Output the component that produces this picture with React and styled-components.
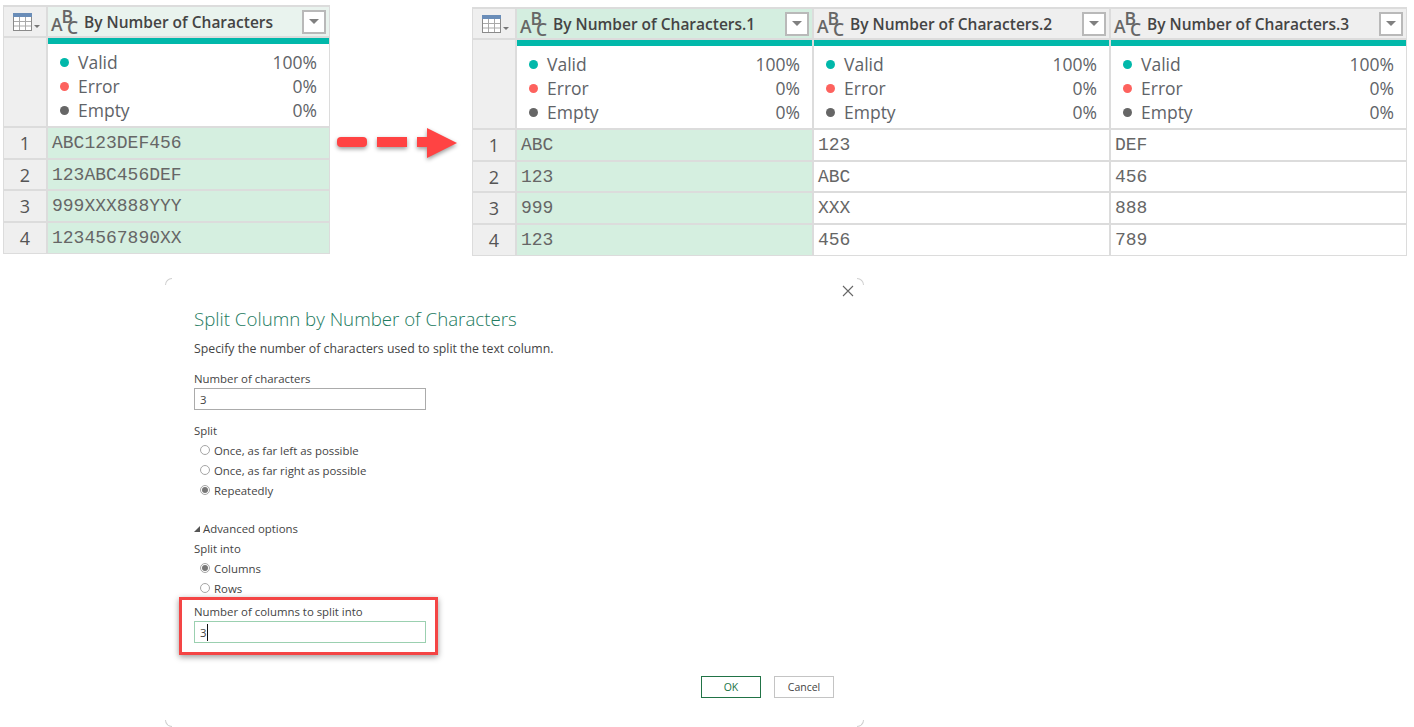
import React from 'react';
import styled, { createGlobalStyle } from 'styled-components';

const UI_FONT = '"Open Sans", "Noto Sans", sans-serif';

const GlobalStyle = createGlobalStyle`
  html, body {
    margin: 0;
    padding: 0;
    background: #fff;
  }
  * {
    box-sizing: border-box;
  }
`;

const Page = styled.div`
  width: 1414px;
  height: 727px;
  overflow: hidden;
  padding: 5px 0 0 3px;
  font-family: ${UI_FONT};
  color: #555;
`;

const TopRow = styled.div`
  display: flex;
  align-items: flex-start;
  height: 251px;
`;

const Table = styled.div`
  display: grid;
  grid-template-columns: ${p => p.$indexWidth}px repeat(${p => p.$cols}, ${p => p.$colWidth}px);
  grid-template-rows: 29px 88px ${p => p.$rowHeights};
  gap: 2px;
  padding: 2px 1px 1px;
  margin-top: ${p => p.$offset || 0}px;
  background: #dcdcdc;
  width: fit-content;
`;

const IndexHead = styled.div`
  background: #efefef;
  display: flex;
  align-items: center;
  padding-left: 9px;
`;

const IndexCell = styled.div`
  background: #efefef;
  display: flex;
  align-items: center;
  justify-content: center;
  font-size: 18px;
  color: #555;
`;

const ColHead = styled.div`
  background: ${p => (p.$tint === 'strong' ? '#d4eee0' : p.$tint === 'soft' ? '#e9f3ee' : '#efefef')};
  display: flex;
  align-items: center;
  padding: 0 3px;
`;

const ColName = styled.span`
  flex: 1;
  margin-left: 7px;
  font-size: 15.5px;
  font-weight: 600;
  color: #444;
  white-space: nowrap;
`;

const FilterButton = styled.div`
  width: 24px;
  height: 24px;
  background: #fff;
  border: 2px solid #b9b9b9;
  display: flex;
  align-items: center;
  justify-content: center;
  &::after {
    content: '';
    border-left: 5px solid transparent;
    border-right: 5px solid transparent;
    border-top: 5px solid #808080;
  }
`;

const StatsCell = styled.div`
  background: #fff;
  border-top: 6px solid #01b8aa;
  padding: 6px 12px 0;
`;

const StatRow = styled.div`
  display: flex;
  align-items: center;
  height: 24px;
  font-size: 17.5px;
  color: #5f6368;
`;

const Dot = styled.span`
  width: 9px;
  height: 9px;
  border-radius: 50%;
  margin-right: 9px;
  background: ${p => p.$color};
`;

const StatValue = styled.span`
  margin-left: auto;
`;

const DataCell = styled.div`
  background: ${p => (p.$selected ? '#d5efe0' : '#fff')};
  display: flex;
  align-items: center;
  padding-left: 4px;
  font-family: "Liberation Mono", monospace;
  font-size: 18px;
  color: #666;
  white-space: pre;
`;

const ArrowSlot = styled.div`
  width: 142px;
  height: 251px;
  padding: 123px 0 0 7px;
`;

const Dialog = styled.div`
  position: relative;
  width: 699px;
  height: 449px;
  margin: 22px 0 0 162px;
  padding: 27px 30px 0 29px;
  font-size: 11.4px;
  color: #444;
`;

const Corner = styled.span`
  position: absolute;
  width: 7px;
  height: 7px;
  border: 0 solid #cfcfcf;
  ${p => (p.$v === 'top' ? 'top: 0; border-top-width: 1px;' : 'bottom: 0; border-bottom-width: 1px;')}
  ${p => (p.$h === 'left' ? 'left: 0; border-left-width: 1px;' : 'right: 0; border-right-width: 1px;')}
  border-${p => p.$v}-${p => p.$h}-radius: 7px;
`;

const CloseIcon = styled.svg`
  position: absolute;
  top: 7px;
  right: 10px;
`;

const Title = styled.div`
  font-size: 18.7px;
  font-weight: 300;
  line-height: 28px;
  color: #217a5e;
  white-space: nowrap;
`;

const Description = styled.div`
  font-size: 12.3px;
  height: 20px;
  line-height: 22px;
  margin-top: 5px;
`;

const Label = styled.div`
  height: 20px;
  line-height: 22px;
  margin-top: ${p => p.$top || 0}px;
`;

const TextInput = styled.div`
  width: 232px;
  height: 22px;
  border: 1px solid ${p => (p.$focused ? '#9bd0b0' : '#ababab')};
  display: flex;
  align-items: center;
  padding-left: 5px;
`;

const Caret = styled.span`
  width: 1px;
  height: 17px;
  background: #111;
`;

const RadioRow = styled.div`
  display: flex;
  align-items: center;
  height: 20px;
  padding-left: 6px;
`;

const Radio = styled.span`
  width: 10px;
  height: 10px;
  border-radius: 50%;
  border: 1px solid #a6a6a6;
  margin-right: 4px;
  display: flex;
  align-items: center;
  justify-content: center;
  &::after {
    content: '';
    display: ${p => (p.$checked ? 'block' : 'none')};
    width: 6px;
    height: 6px;
    border-radius: 50%;
    background: #777;
  }
`;

const Advanced = styled.div`
  display: flex;
  align-items: center;
  height: 20px;
  padding-top: 2px;
  line-height: 22px;
  margin-top: 18px;
  &::before {
    content: '';
    width: 0;
    height: 0;
    margin-right: 3px;
    border-left: 6px solid transparent;
    border-bottom: 6px solid #555;
  }
`;

const Highlight = styled.div`
  width: 259px;
  height: 58px;
  margin: -1px 0 0 -15px;
  padding: 1px 0 0 12px;
  border: 3px solid #f44545;
  box-shadow: 0 2px 6px rgba(0, 0, 0, 0.4);
`;

const ButtonRow = styled.div`
  display: flex;
  justify-content: flex-end;
  gap: 13px;
  margin-top: 21px;
`;

const Button = styled.div`
  width: 60px;
  height: 22px;
  display: flex;
  align-items: center;
  justify-content: center;
  font-size: 10.5px;
  border: 1px solid ${p => (p.$primary ? '#217346' : '#c4c4c4')};
  color: ${p => (p.$primary ? '#217346' : '#444')};
`;

const TableIcon = () => (
  <svg width="28" height="18" viewBox="0 0 28 18">
    <rect x="0.5" y="0.5" width="18" height="17" fill="#fff" stroke="#8a8a8a" />
    <rect x="0" y="0" width="19" height="4" fill="#6a8db8" />
    <path d="M6.5 4v13M12.5 4v13M1 8.5h17M1 13h17" stroke="#a9a9a9" />
    <path d="M21 12h6l-3 3z" fill="#777" />
  </svg>
);

const AbcIcon = () => (
  <svg
    width="26"
    height="27"
    viewBox="0 0 26 27"
    overflow="visible"
    fontFamily={UI_FONT}
    fontSize="17.5"
    fontWeight="600"
    fill="#666"
  >
    <text x="0" y="23">A</text>
    <text x="10.5" y="15">B</text>
    <text x="16" y="26">C</text>
  </svg>
);

const ArrowIcon = () => (
  <svg width="130" height="40" viewBox="0 0 130 40" style={{ filter: 'drop-shadow(0 2px 2px rgba(0,0,0,0.4))' }}>
    <rect x="0" y="9" width="30" height="10" rx="4" fill="#ff4343" />
    <rect x="40" y="9" width="30" height="10" fill="#ff4343" />
    <path d="M80 9h10V0l30 15-30 15V19H80z" fill="#ff4343" />
  </svg>
);

const stats = [
  { label: 'Valid', value: '100%', color: '#01b8aa' },
  { label: 'Error', value: '0%', color: '#fd625e' },
  { label: 'Empty', value: '0%', color: '#666' },
];

const DataTable = ({ columns, rows, indexWidth, colWidth, rowHeights, offset }) => (
  <Table $indexWidth={indexWidth} $colWidth={colWidth} $cols={columns.length} $offset={offset} $rowHeights={rowHeights}>
    <IndexHead>
      <TableIcon />
    </IndexHead>
    {columns.map(col => (
      <ColHead key={col.name} $tint={col.tint}>
        <AbcIcon />
        <ColName>{col.name}</ColName>
        <FilterButton />
      </ColHead>
    ))}
    <IndexCell />
    {columns.map(col => (
      <StatsCell key={col.name}>
        {stats.map(s => (
          <StatRow key={s.label}>
            <Dot $color={s.color} />
            {s.label}
            <StatValue>{s.value}</StatValue>
          </StatRow>
        ))}
      </StatsCell>
    ))}
    {rows.map((row, i) => (
      <React.Fragment key={i}>
        <IndexCell>{i + 1}</IndexCell>
        {row.map((val, j) => (
          <DataCell key={j} $selected={columns[j].selected}>
            {val}
          </DataCell>
        ))}
      </React.Fragment>
    ))}
  </Table>
);

const App = () => (
  <Page>
    <GlobalStyle />
    <TopRow>
      <DataTable
        indexWidth={42}
        colWidth={281}
        rowHeights="30px 29px 30px 30px"
        columns={[{ name: 'By Number of Characters', tint: 'soft', selected: true }]}
        rows={[['ABC123DEF456'], ['123ABC456DEF'], ['999XXX888YYY'], ['1234567890XX']]}
      />
      <ArrowSlot>
        <ArrowIcon />
      </ArrowSlot>
      <DataTable
        indexWidth={42}
        colWidth={295}
        rowHeights="30px 29px 30px 30px"
        offset={2}
        columns={[
          { name: 'By Number of Characters.1', tint: 'strong', selected: true },
          { name: 'By Number of Characters.2' },
          { name: 'By Number of Characters.3' },
        ]}
        rows={[
          ['ABC', '123', 'DEF'],
          ['123', 'ABC', '456'],
          ['999', 'XXX', '888'],
          ['123', '456', '789'],
        ]}
      />
    </TopRow>
    <Dialog>
      <Corner $v="top" $h="left" />
      <Corner $v="top" $h="right" />
      <Corner $v="bottom" $h="left" />
      <Corner $v="bottom" $h="right" />
      <CloseIcon width="12" height="12" viewBox="0 0 12 12">
        <path d="M1 1l10 10M11 1L1 11" stroke="#666" strokeWidth="1.1" />
      </CloseIcon>
      <Title>Split Column by Number of Characters</Title>
      <Description>Specify the number of characters used to split the text column.</Description>
      <Label $top={10}>Number of characters</Label>
      <TextInput>3</TextInput>
      <Label $top={10}>Split</Label>
      <RadioRow><Radio />Once, as far left as possible</RadioRow>
      <RadioRow><Radio />Once, as far right as possible</RadioRow>
      <RadioRow><Radio $checked />Repeatedly</RadioRow>
      <Advanced>Advanced options</Advanced>
      <Label>Split into</Label>
      <RadioRow><Radio $checked />Columns</RadioRow>
      <RadioRow><Radio />Rows</RadioRow>
      <Highlight>
        <Label>Number of columns to split into</Label>
        <TextInput $focused>3<Caret /></TextInput>
      </Highlight>
      <ButtonRow>
        <Button $primary>OK</Button>
        <Button>Cancel</Button>
      </ButtonRow>
    </Dialog>
  </Page>
);

export default App;
